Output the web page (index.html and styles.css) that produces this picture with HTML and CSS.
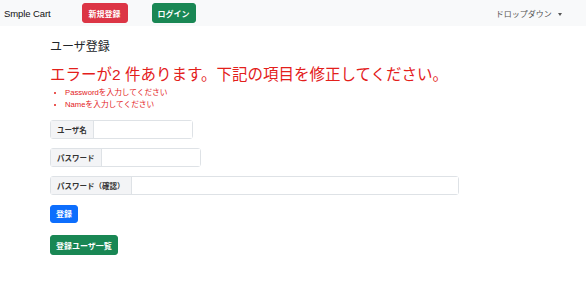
FILE: index.html
```html
<!doctype html>
<html lang="ja">
<head>
    <meta charset="UTF-8">
    <title>ユーザ登録</title>
    <link rel="stylesheet" href="styles.css">
</head>
<body>
<nav class="navbar">
    <span class="brand">Smple Cart</span>
    <a class="btn btn-danger nav-btn">新規登録</a>
    <a class="btn btn-success nav-btn">ログイン</a>
    <span class="dropdown">ドロップダウン <span class="caret"></span></span>
</nav>
<div class="container">
    <h3 class="title">ユーザ登録</h3>
    <h1 class="error-title">エラーが2 件あります。下記の項目を修正してください。</h1>
    <ul class="error-list">
        <li>Passwordを入力してください</li>
        <li>Nameを入力してください</li>
    </ul>
    <div class="input-group w1">
        <span class="group-label">ユーザ名</span>
        <input class="group-input" type="text">
    </div>
    <div class="input-group w2">
        <span class="group-label">パスワード</span>
        <input class="group-input" type="password">
    </div>
    <div class="input-group w3">
        <span class="group-label">パスワード（確認）</span>
        <input class="group-input" type="password">
    </div>
    <div class="submit-row"><button class="btn btn-primary">登録</button></div>
    <div class="list-row"><a class="btn btn-success">登録ユーザ一覧</a></div>
</div>
</body>
</html>
```

FILE: styles.css
```css
body { margin: 0; font-family: "Liberation Sans", "Noto Sans CJK JP", sans-serif; color: #212529; background: #fff; }

.navbar { display: flex; align-items: center; height: 26px; background: #f8f9fa; padding: 0 4px; }
.brand { font-size: 9.5px; color: #111; margin-right: 31px; letter-spacing: -0.1px; }
.btn { display: inline-flex; align-items: center; justify-content: center; height: 18px; padding: 0 6px; font-size: 8px; font-weight: bold; color: #fff; border: 1px solid transparent; border-radius: 3px; font-family: inherit; box-sizing: content-box; }
.nav-btn { margin-right: 24px; }
.nav-btn + .nav-btn { padding: 0 5px; }
.btn-danger { background: #dc3545; border-color: #dc3545; }
.btn-success { background: #198754; border-color: #198754; }
.btn-primary { background: #0d6efd; border-color: #0d6efd; padding: 0 5px; height: 16px; }
.dropdown { margin-left: auto; margin-right: 20px; font-size: 8px; color: #555; }
.caret { display: inline-block; margin-left: 4px; border-top: 3px solid #555; border-left: 2.5px solid transparent; border-right: 2.5px solid transparent; vertical-align: middle; }

.container { padding-left: 50px; }
.title { margin: 13px 0 0; font-size: 12px; font-weight: normal; line-height: 16px; }
.error-title { margin: 10px 0 0; font-size: 15.5px; font-weight: normal; color: #e3201b; line-height: 20px; }
.error-list { margin: 2px 0 0; padding-left: 15px; font-size: 7.7px; color: #e3201b; line-height: 12px; }

.input-group { display: flex; height: 17px; border: 1px solid #dee2e6; border-radius: 3px; margin-top: 9px; box-sizing: content-box; }
.w1 { width: 141px; }
.w2 { width: 149px; }
.w3 { width: 407px; }
.group-label { display: flex; align-items: center; padding: 0 6px; background: #f3f4f6; border-right: 1px solid #dee2e6; font-size: 7.5px; font-weight: bold; color: #333; }
.group-input { flex: 1; border: 0; padding: 0; min-width: 0; background: #fff; }

.submit-row { margin-top: 8px; }
.list-row { margin-top: 12px; }
.list-row .btn { padding: 0 5px; }
```
